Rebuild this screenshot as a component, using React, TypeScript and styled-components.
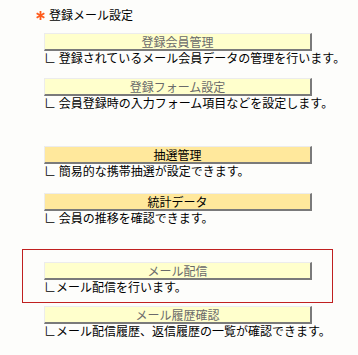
import React from 'react';
import styled, { createGlobalStyle } from 'styled-components';

const GlobalStyle = createGlobalStyle`
  body {
    margin: 0;
    background: #fdfdfb;
    font-family: "Noto Sans CJK JP", "Noto Sans", sans-serif;
    font-size: 12px;
    color: #000;
  }
`;

const Page = styled.div`
  width: 358px;
  height: 355px;
  padding: 8px 0 0 36px;
  box-sizing: border-box;
`;

const Title = styled.div`
  display: flex;
  align-items: center;
  gap: 4px;
  height: 14px;
  font-size: 12px;
  line-height: 14px;
`;

const List = styled.div`
  display: flex;
  flex-direction: column;
  padding-left: 8px;
`;

const Item = styled.div<{ $top: number }>`
  margin-top: ${(p) => p.$top}px;
`;

const Highlight = styled.div<{ $top: number }>`
  margin: ${(p) => p.$top}px 0 0 -22px;
  width: 311px;
  height: 54px;
  box-sizing: border-box;
  border: 1px solid #c02020;
  padding: 12px 0 0 21px;
`;

const MenuButton = styled.button<{ $active?: boolean }>`
  display: block;
  width: 268px;
  height: 18px;
  box-sizing: border-box;
  padding: 0;
  margin: 0;
  border-style: solid;
  border-width: 1px 2px 2px 1px;
  border-color: #ececec #7a7a7a #7a7a7a #ececec;
  background: ${(p) => (p.$active ? '#ffe89c' : '#ffffcc')};
  color: ${(p) => (p.$active ? '#000' : '#6a6a6a')};
  font-family: inherit;
  font-size: 12px;
  line-height: 15px;
  text-align: center;
  cursor: pointer;
`;

const Desc = styled.div`
  height: 14px;
  font-size: 12px;
  line-height: 14px;
  white-space: nowrap;
`;

const Star = () => (
  <svg width="9" height="9" viewBox="0 0 10 10">
    <g stroke="#ff5a1a" strokeWidth="2" strokeLinecap="butt">
      <line x1="5" y1="0" x2="5" y2="10" />
      <line x1="0.7" y1="2.5" x2="9.3" y2="7.5" />
      <line x1="0.7" y1="7.5" x2="9.3" y2="2.5" />
    </g>
  </svg>
);

type Entry = { label: string; desc: string; active?: boolean; top: number };

const entries: Entry[] = [
  { label: '登録会員管理', desc: '∟ 登録されているメール会員データの管理を行います。', top: 11 },
  { label: '登録フォーム設定', desc: '∟ 会員登録時の入力フォーム項目などを設定します。', top: 13 },
  { label: '抽選管理', desc: '∟ 簡易的な携帯抽選が設定できます。', active: true, top: 36 },
  { label: '統計データ', desc: '∟ 会員の推移を確認できます。', active: true, top: 15 },
];

const MenuItem = ({ label, desc, active }: Omit<Entry, 'top'>) => (
  <>
    <MenuButton $active={active}>{label}</MenuButton>
    <Desc>{desc}</Desc>
  </>
);

export default function App() {
  return (
    <>
      <GlobalStyle />
      <Page>
        <Title>
          <Star />
          <span>登録メール設定</span>
        </Title>
        <List>
          {entries.map((e) => (
            <Item key={e.label} $top={e.top}>
              <MenuItem label={e.label} desc={e.desc} active={e.active} />
            </Item>
          ))}
          <Highlight $top={24}>
            <MenuItem label="メール配信" desc="∟メール配信を行います。" />
          </Highlight>
          <Item $top={3}>
            <MenuItem label="メール履歴確認" desc="∟メール配信履歴、返信履歴の一覧が確認できます。" />
          </Item>
        </List>
      </Page>
    </>
  );
}
